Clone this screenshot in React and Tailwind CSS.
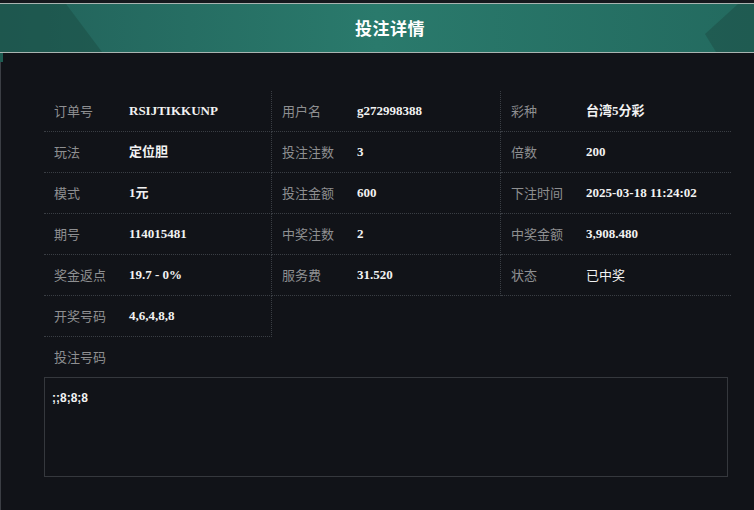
import React from 'react';

const rows = [
  ['订单号', 'RSIJTIKKUNP'],
  ['用户名', 'g272998388'],
  ['彩种', '台湾5分彩'],
  ['玩法', '定位胆'],
  ['投注注数', '3'],
  ['倍数', '200'],
  ['模式', '1元'],
  ['投注金额', '600'],
  ['下注时间', '2025-03-18 11:24:02'],
  ['期号', '114015481'],
  ['中奖注数', '2'],
  ['中奖金额', '3,908.480'],
  ['奖金返点', '19.7 - 0%'],
  ['服务费', '31.520'],
  ['状态', '已中奖', true],
  ['开奖号码', '4,6,4,8,8'],
];

const cjk = { fontFamily: '"Noto Sans CJK SC", "Liberation Sans", sans-serif' };
const serif = { fontFamily: '"Liberation Serif", "Noto Sans CJK SC", serif' };

function Cell({ label, value, plain, col }) {
  return (
    <div
      className={`flex items-center h-[41px] pl-[10px] border-b border-dotted border-[#3a3e44] ${
        col < 2 ? 'border-r' : ''
      }`}
    >
      <span className="w-[75px] text-[13px] text-[#8e8f91]" style={cjk}>
        {label}
      </span>
      <span
        className={`text-[13px] text-[#f2f2f2] ${plain ? 'font-normal' : 'font-bold'}`}
        style={plain ? cjk : serif}
      >
        {value}
      </span>
    </div>
  );
}

export default function App() {
  return (
    <div className="w-[754px] h-[510px] overflow-hidden bg-[#111318]" style={cjk}>
      <div className="h-[3px] bg-[#16181d]" />

      {/* Header */}
      <div className="relative h-[50px] border-y border-[#a9b4b1] bg-gradient-to-r from-[#22625a] via-[#2a7a6c] to-[#236a5f] flex items-center justify-center pl-[26px]">
        <svg className="absolute inset-0" width="754" height="48" viewBox="0 0 754 48">
          <polygon points="0,0 66,0 102,48 0,48" fill="#1c4f45" opacity="0.55" />
          <polygon points="705,30 738,0 754,0 754,48 716,48" fill="#1b4c44" opacity="0.5" />
        </svg>
        <h1 className="relative text-[17px] font-bold text-white tracking-[0.5px]">投注详情</h1>
      </div>

      {/* Body */}
      <div className="relative h-[457px] border-l border-[#3b3e44] pl-[43px] pt-[38px]">
        <div className="absolute left-[-1px] top-0 w-[3px] h-[9px] bg-[#1e5c52]" />
        <div className="grid grid-cols-[228px_229px_230px] w-[687px]">
          {rows.map(([label, value, plain], i) => (
            <Cell key={i} label={label} value={value} plain={plain} col={i % 3} />
          ))}
        </div>

        <div className="flex items-center h-[40px] pl-[10px]">
          <span className="text-[13px] text-[#8e8f91]">投注号码</span>
        </div>
        <div className="w-[684px] h-[100px] border border-[#35383d] px-[7px] pt-[13px]">
          <p
            className="text-[12px] leading-[14px] font-bold text-[#f2f2f2]"
            style={{ fontFamily: '"Liberation Sans", sans-serif' }}
          >
            ;;8;8;8
          </p>
        </div>
      </div>
    </div>
  );
}
